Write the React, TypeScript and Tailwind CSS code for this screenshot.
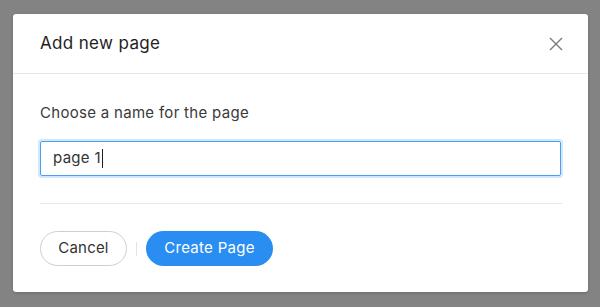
import React from "react";

export default function App() {
  const font = { fontFamily: 'Inter, "Liberation Sans", Arial, sans-serif' };
  return (
    <div className="w-[600px] h-[307px] bg-[#838383] pt-[14px] pl-[13px] overflow-hidden" style={font}>
      <div className="w-[575px] h-[278px] bg-white rounded-[3px] shadow-[0_1px_3px_rgba(0,0,0,0.2)] flex flex-col">
        <div className="h-[60px] border-b border-[#e8e8e8] pl-[27px] pr-[25px] flex items-center justify-between">
          <span className="text-[17px] text-[#1e1e1e] tracking-[0.35px]">Add new page</span>
          <svg width="14" height="14" viewBox="0 0 14 14" className="mt-[1px]">
            <path d="M1 1 L13 13 M13 1 L1 13" stroke="#7a7a7a" strokeWidth="1.4" fill="none" />
          </svg>
        </div>
        <div className="px-[27px] pt-[29px] flex flex-col">
          <div className="text-[15px] leading-[20px] text-[#3a3a3a] tracking-[0.3px]">Choose a name for the page</div>
          <div className="mt-[18px] w-[521px] h-[35px] rounded-[2px] border border-[#4a9ff5] shadow-[0_0_0_2px_#d3e7fc] flex items-center pl-[12px]">
            <span className="text-[15px] text-[#333] tracking-[0.3px]">page 1</span>
            <span className="w-[1px] h-[19px] bg-[#222] ml-[1px]" />
          </div>
          <div className="mt-[27px] h-[1px] w-[522px] bg-[#e8e8e8]" />
          <div className="mt-[27px] flex items-center">
            <button className="w-[87px] h-[35px] rounded-full border border-[#cfcfcf] text-[15px] text-[#333] bg-white tracking-[0.2px]">Cancel</button>
            <span className="w-[1px] h-[14px] bg-[#e3e3e3] mx-[9px]" />
            <button className="w-[127px] h-[35px] rounded-full bg-[#2a8df2] text-[15px] text-white tracking-[0.3px]">Create Page</button>
          </div>
        </div>
      </div>
    </div>
  );
}
